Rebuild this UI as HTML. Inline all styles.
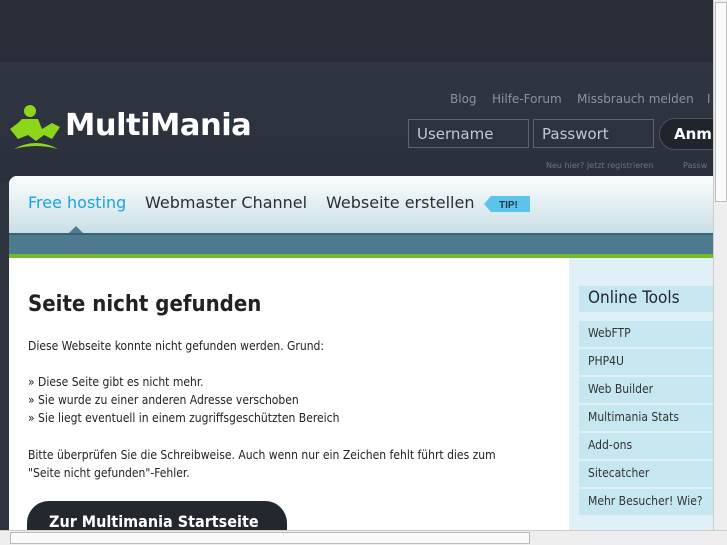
<!DOCTYPE html>
<html><head><meta charset="utf-8"><style>
*{margin:0;padding:0;box-sizing:border-box}
body{width:727px;height:545px;overflow:hidden;position:relative;font-family:"DejaVu Sans","Liberation Sans",sans-serif;background:#2c323e}
.top{position:absolute;left:0;top:0;width:713px;height:62px;background:#282d38}
.hdr{position:absolute;left:0;top:62px;width:713px;height:120px;background:linear-gradient(#2f3542,#2a303b)}
.logo{position:absolute;left:8px;top:103px}
.logotxt{position:absolute;left:65px;top:108px;color:#fff;font-size:30.5px;font-weight:bold;letter-spacing:-0.5px}
.links{position:absolute;top:92px;font-size:12px;color:#8a93a0;white-space:nowrap}
.inp{position:absolute;top:119px;height:29px;border:1px solid #5a6472;color:#c4c8cf;font-size:15px;padding:5px 8px;background:#2c323e}
.btn{position:absolute;left:659px;top:118px;width:80px;height:32px;border-radius:16px;background:#1f242d;border:1px solid #4a5260;color:#fff;font-weight:bold;font-size:15px;padding:6px 14px}
.small{position:absolute;top:161px;font-size:8px;color:#6d7684;white-space:nowrap}
.panel{position:absolute;left:9px;top:176px;width:704px;height:360px;background:#fff;border-radius:8px 0 0 0;overflow:hidden}
.nav{position:absolute;left:0;top:0;width:704px;height:57px;background:linear-gradient(#fbfdfd,#c9dfe6)}
.nav span{position:absolute;top:17px;font-size:16px;color:#2a2e35;white-space:nowrap}
.bar{position:absolute;left:0;top:57px;width:704px;height:21px;background:#4d7a8f;border-top:2px solid #3e6275}
.green{position:absolute;left:0;top:78px;width:704px;height:4px;background:#78b72a}
.side{position:absolute;left:560px;top:82px;width:144px;height:300px;background:#dff0f6}
.sh{position:absolute;left:570px;top:110px;width:134px;height:26px;background:#c6e6f0;font-size:17px;color:#1e2630;padding:2px 9px;font-family:"DejaVu Sans Condensed","DejaVu Sans",sans-serif}
.si{position:absolute;left:570px;width:134px;height:26px;background:#c6e6f0;font-size:12px;color:#333;padding:5px 9px;white-space:nowrap;font-family:"DejaVu Sans Condensed","DejaVu Sans",sans-serif}
h1{position:absolute;left:19px;top:116px;font-size:22px;color:#222;font-weight:bold;font-family:"DejaVu Sans Condensed","DejaVu Sans",sans-serif}
.txt{position:absolute;left:19px;font-size:12px;color:#222;line-height:18px;white-space:nowrap;font-family:"DejaVu Sans Condensed","DejaVu Sans",sans-serif}
.big{position:absolute;left:18px;top:325px;width:260px;height:50px;border-radius:22px;background:#23272e;color:#fff;font-size:16px;font-weight:bold;padding:11px 22px;white-space:nowrap;font-family:"DejaVu Sans Condensed","DejaVu Sans",sans-serif}
.vs{position:absolute;left:713px;top:0;width:14px;height:530px;background:#eee;border-left:1px solid #ccc}
.hs{position:absolute;left:0;top:530px;width:727px;height:15px;background:#eee;border-top:1px solid #ccc}
</style></head><body>
<div class="top"></div><div class="hdr"></div>
<svg class="logo" width="56" height="48" viewBox="0 0 56 48">
<circle cx="22" cy="8" r="6" fill="#8ed61c"/>
<path d="M14 16 L30 16 L34 26 L44 20 L52 24 L44 36 L36 32 L28 38 L20 32 L10 36 L2 26 L10 20 Z" fill="#8ed61c"/>
<path d="M6 46 Q28 34 50 46 Q28 40 6 46Z" fill="#8ed61c"/>
</svg>
<div class="logotxt">MultiMania</div>
<div class="links" style="left:450px">Blog</div>
<div class="links" style="left:492px">Hilfe-Forum</div>
<div class="links" style="left:577px">Missbrauch melden</div>
<div class="links" style="left:707px">I</div>
<div class="inp" style="left:408px;width:121px">Username</div>
<div class="inp" style="left:533px;width:121px">Passwort</div>
<div class="btn">Anm</div>
<div class="small" style="left:546px">Neu hier? Jetzt registrieren</div>
<div class="small" style="left:683px">Passw</div>
<div class="panel">
<div class="nav">
<span style="left:19px;color:#1aa3e0">Free hosting</span>
<span style="left:136px">Webmaster Channel</span>
<span style="left:317px">Webseite erstellen</span>
<svg style="position:absolute;left:474px;top:19px" width="48" height="18"><path d="M8 1 H47 V17 H8 L1 9Z" fill="#5cc3ea"/><text x="16" y="13" font-size="10" font-weight="bold" fill="#1c3a4a" font-family="Liberation Sans">TIP!</text></svg>
<svg style="position:absolute;left:59px;top:49px" width="16" height="9"><path d="M0 9 L8 1 L16 9Z" fill="#4d7a8f"/></svg>
</div>
<div class="bar"></div><div class="green"></div>
<div class="side"></div>
<div class="sh">Online Tools</div>
<div class="si" style="top:145px">WebFTP</div>
<div class="si" style="top:173px">PHP4U</div>
<div class="si" style="top:201px">Web Builder</div>
<div class="si" style="top:229px">Multimania Stats</div>
<div class="si" style="top:257px">Add-ons</div>
<div class="si" style="top:285px">Sitecatcher</div>
<div class="si" style="top:313px">Mehr Besucher! Wie?</div>
<h1>Seite nicht gefunden</h1>
<div class="txt" style="top:161px">Diese Webseite konnte nicht gefunden werden. Grund:</div>
<div class="txt" style="top:197px">» Diese Seite gibt es nicht mehr.<br>» Sie wurde zu einer anderen Adresse verschoben<br>» Sie liegt eventuell in einem zugriffsgeschützten Bereich</div>
<div class="txt" style="top:270px">Bitte überprüfen Sie die Schreibweise. Auch wenn nur ein Zeichen fehlt führt dies zum<br>"Seite nicht gefunden"-Fehler.</div>
<div class="big">Zur Multimania Startseite</div>
</div>
<div class="vs"><div style="position:absolute;left:1px;top:2px;width:12px;height:200px;background:#fafafa;border:1px solid #bbb"></div></div>
<div class="hs"><div style="position:absolute;left:10px;top:1px;width:520px;height:12px;background:#fafafa;border:1px solid #bbb"></div></div>
</body></html>
